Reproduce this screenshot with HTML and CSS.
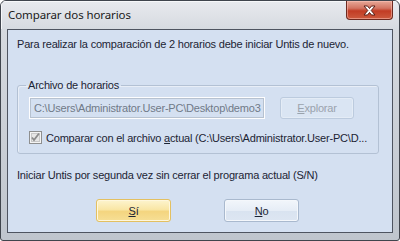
FILE: index.html
```html
<!DOCTYPE html>
<html>
<head>
<meta charset="utf-8">
<link rel="stylesheet" href="styles.css">
</head>
<body>
<div class="window">
  <div class="titlebar">
    <span class="title">Comparar dos horarios</span>
    <div class="close">
      <svg width="17" height="11" viewBox="0 0 17 11">
        <path d="M3 1h3.5l2 2.5 2-2.5h3.5l-3.8 4.5 3.8 4.5h-3.5l-2-2.5-2 2.5h-3.5l3.8-4.5z" fill="#fff" stroke="#5a2018" stroke-width="1" stroke-linejoin="round"/>
      </svg>
    </div>
  </div>
  <div class="client">
    <p class="msg">Para realizar la comparación de 2 horarios debe iniciar Untis de nuevo.</p>
    <fieldset class="group">
      <legend>Archivo de horarios</legend>
      <div class="filerow">
        <div class="field">C:\Users\Administrator.User-PC\Desktop\demo3</div>
        <div class="btn disabled"><u>E</u>xplorar</div>
      </div>
      <div class="checkrow">
        <span class="check">
          <svg width="13" height="13" viewBox="0 0 13 13">
            <rect x="0.5" y="0.5" width="12" height="12" fill="#f4f4f4" stroke="#8e8f8f"/>
            <rect x="2.5" y="2.5" width="8" height="8" fill="#e6e6e6" stroke="#c8c8c8"/>
            <path d="M3 6.5l2 2.5 5-6.5" fill="none" stroke="#8c8c8c" stroke-width="1.8"/>
          </svg>
        </span>
        <span class="checklabel">Comparar con el archivo <u>a</u>ctual (C:\Users\Administrator.User-PC\D...</span>
      </div>
    </fieldset>
    <p class="msg question">Iniciar Untis por segunda vez sin cerrar el programa actual (S/N)</p>
    <div class="buttons">
      <div class="btn default"><u>S</u>í</div>
      <div class="btn"><u>N</u>o</div>
    </div>
  </div>
</div>
</body>
</html>
```
FILE: styles.css
```css
html, body {
  margin: 0;
  padding: 0;
  background: #ffffff;
}
.window {
  width: 400px;
  height: 241px;
  box-sizing: border-box;
  border: 1px solid #40454d;
  border-radius: 6px 6px 3px 3px;
  background: linear-gradient(to bottom, #e8eaee 0px, #d5d9df 30px, #bfc5cd 100%);
  display: flex;
  flex-direction: column;
  font-family: "Liberation Sans", Arial, sans-serif;
  font-size: 11px;
  letter-spacing: -0.2px;
  color: #1c2434;
  overflow: hidden;
}
.titlebar {
  height: 28px;
  display: flex;
  align-items: flex-start;
  flex-shrink: 0;
  box-shadow: inset 1px 1px 0 #f7f8fa;
}
.title {
  font-family: "Noto Sans", sans-serif;
  font-size: 11.5px;
  letter-spacing: -0.1px;
  color: #1a1a1a;
  padding: 6px 0 0 7px;
}
.close {
  margin-left: auto;
  margin-right: 6px;
  width: 47px;
  height: 19px;
  box-sizing: border-box;
  border: 1px solid #6d2a20;
  border-top: none;
  border-radius: 0 0 4px 4px;
  background: linear-gradient(to bottom, #e7a898 0%, #d27462 40%, #c23c24 55%, #cd5a3e 100%);
  display: flex;
  align-items: center;
  justify-content: center;
  box-shadow: inset 0 0 0 1px rgba(255,200,190,0.5);
}
.client {
  flex: 1;
  margin: 0 6px 7px 6px;
  border: 1px solid #4e5460;
  background: #d4e0f1;
  padding: 0 0 0 9px;
  display: flex;
  flex-direction: column;
}
.msg {
  margin: 8px 0 0 0;
  line-height: 13px;
  white-space: nowrap;
}
.group {
  margin: 28px 16px 0 0;
  padding: 5px 11px 0 11px;
  height: 75px;
  box-sizing: border-box;
  border: 1px solid #b3c1d4;
  border-radius: 3px;
  box-shadow: 1px 1px 0 #e8eef7 inset;
}
.group legend {
  padding: 0 2px;
  margin-left: -3px;
  line-height: 13px;
}
.filerow {
  display: flex;
  align-items: center;
}
.field {
  width: 236px;
  height: 22px;
  box-sizing: border-box;
  border: 1px solid #fdfdfe;
  outline: 1px solid #b7c2d0;
  outline-offset: -2px;
  background: #d4e0f1;
  color: #707a88;
  padding: 0 0 0 4px;
  line-height: 20px;
  white-space: nowrap;
  overflow: hidden;
}
.btn {
  width: 75px;
  height: 23px;
  box-sizing: border-box;
  border: 1px solid #a9b9ce;
  border-radius: 3px;
  background: linear-gradient(to bottom, #f2f6fb 0%, #e6edf6 50%, #d9e3f0 51%, #dde6f2 100%);
  display: flex;
  align-items: center;
  justify-content: center;
  color: #1c2434;
  box-shadow: inset 0 0 0 1px #f4f7fb;
}
.btn.disabled {
  margin-left: 15px;
  width: 74px;
  height: 22px;
  border-color: #bccbde;
  background: #dae5f3;
  color: #9aa3ad;
  box-shadow: inset 0 0 0 1px #e4ecf6;
}
.checkrow {
  display: flex;
  align-items: center;
  margin-top: 12px;
}
.check {
  width: 13px;
  height: 13px;
  display: flex;
}
.checklabel {
  margin-left: 4px;
  white-space: nowrap;
}
.question {
  margin-top: 15px;
}
.buttons {
  display: flex;
  gap: 53px;
  margin-top: 17px;
  padding-left: 79px;
}
.btn.default {
  border-color: #e3c061;
  background: linear-gradient(to bottom, #fdf4cf 0%, #f9e6a5 45%, #f4d57f 55%, #f6df96 100%);
  box-shadow: inset 0 0 0 1px #fff7dc;
}
```
